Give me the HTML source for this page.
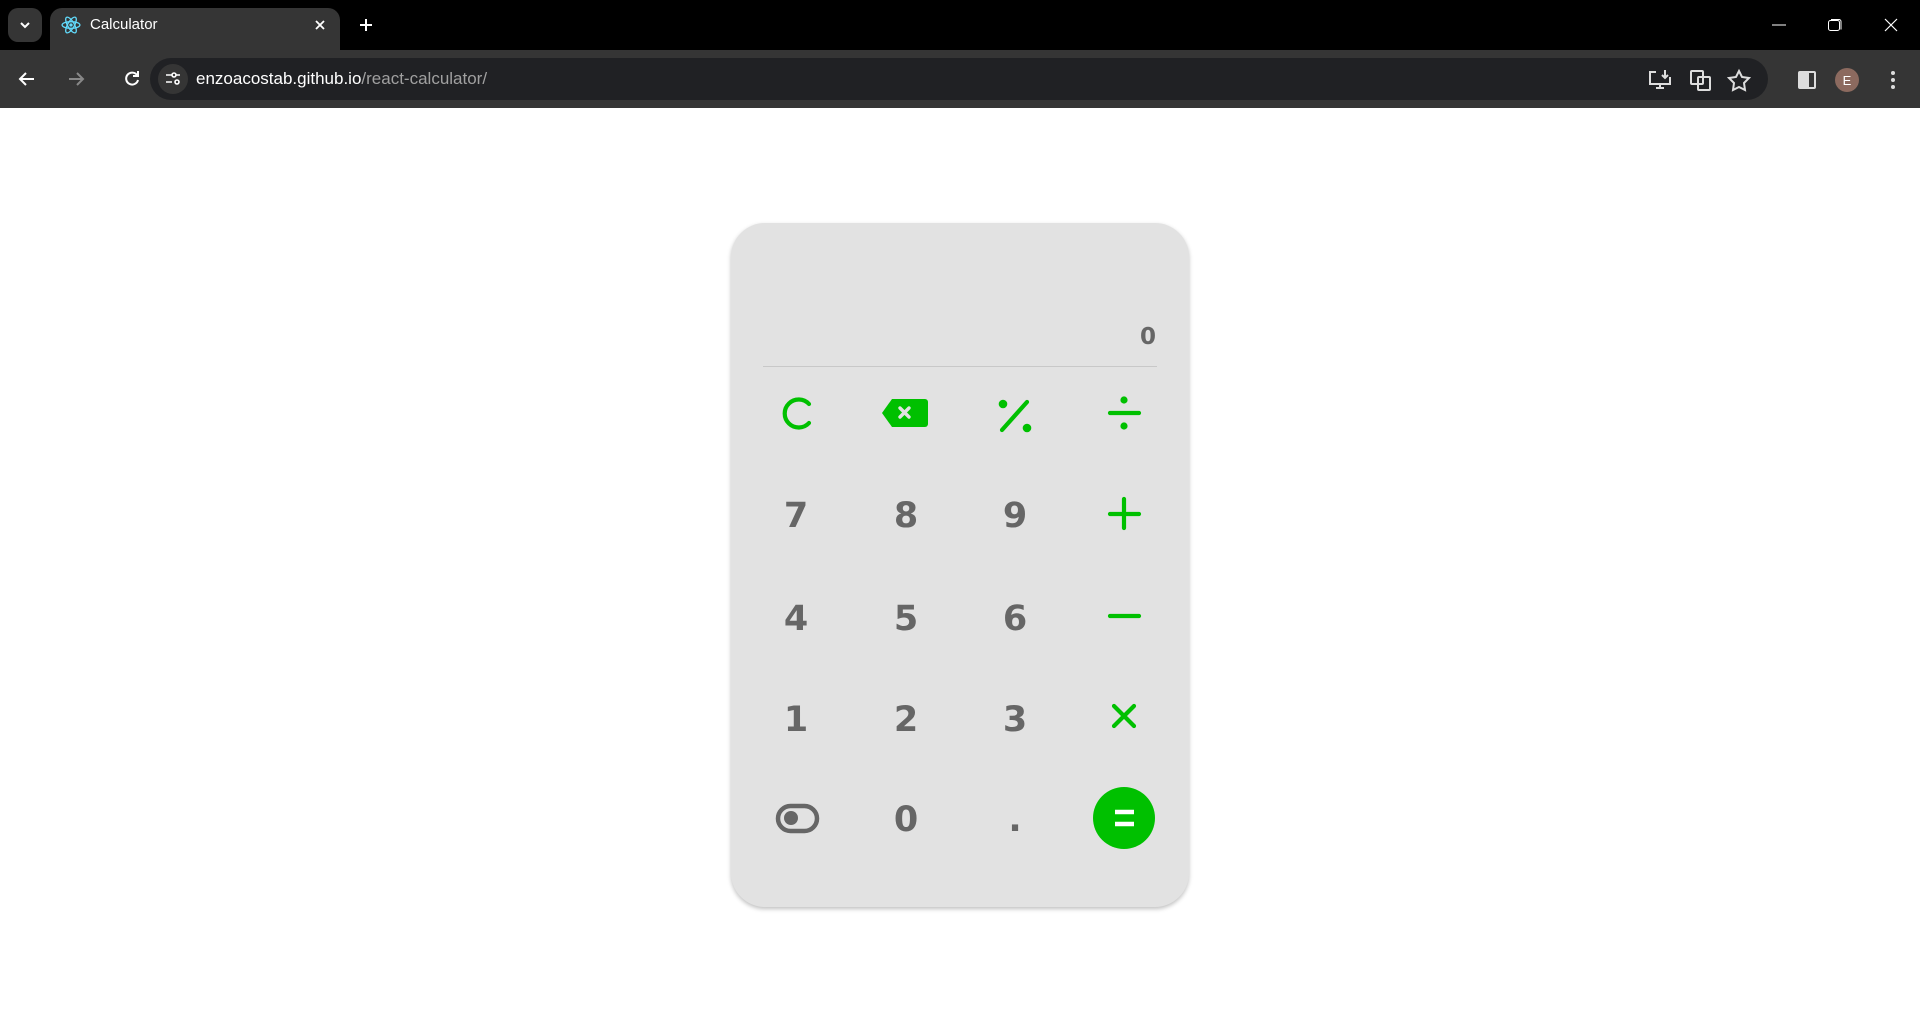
<!DOCTYPE html>
<html><head><meta charset="utf-8"><style>
*{margin:0;padding:0;box-sizing:border-box}
body{width:1920px;height:1020px;background:#fff;position:relative;overflow:hidden;font-family:"Liberation Sans",sans-serif}
.abs{position:absolute}
#tabbar{left:0;top:0;width:1920px;height:50px;background:#000}
#toolbar{left:0;top:50px;width:1920px;height:58px;background:#353535}
#calc{left:731px;top:223px;width:458px;height:684px;background:#e2e2e2;border-radius:34px;box-shadow:0 2px 4px rgba(0,0,0,.25)}
.k{position:absolute;width:90px;height:80px;margin-left:-45px;margin-top:-40px;display:flex;align-items:center;justify-content:center;font-family:"DejaVu Sans","Liberation Sans",sans-serif;font-weight:bold;font-size:35px;color:#666}
</style></head><body>
<div id="tabbar" class="abs"></div>
<div class="abs" style="left:8px;top:8px;width:34px;height:34px;background:#353535;border-radius:10px"></div>
<svg class="abs" style="left:18px;top:18px" width="14" height="14"><path d="M3 5l4 4 4-4" stroke="#fff" stroke-width="2" fill="none"/></svg>
<div class="abs" style="left:50px;top:8px;width:290px;height:46px;background:#353535;border-radius:12px 12px 0 0"></div>
<svg class="abs" style="left:61px;top:15px" width="20" height="20" viewBox="0 0 18 18"><g fill="none" stroke="#61dafb" stroke-width="1.2"><ellipse cx="9" cy="9" rx="8" ry="3"/><ellipse cx="9" cy="9" rx="8" ry="3" transform="rotate(60 9 9)"/><ellipse cx="9" cy="9" rx="8" ry="3" transform="rotate(120 9 9)"/></g><circle cx="9" cy="9" r="1.5" fill="#61dafb"/></svg>
<div class="abs" style="left:90px;top:16px;color:#fff;font-size:15px">Calculator</div>
<svg class="abs" style="left:314px;top:19px" width="12" height="12"><path d="M2 2l8 8M10 2l-8 8" stroke="#fff" stroke-width="1.8"/></svg>
<svg class="abs" style="left:359px;top:18px" width="14" height="14"><path d="M7 1v12M1 7h12" stroke="#fff" stroke-width="2"/></svg>
<svg class="abs" style="left:1770px;top:18px" width="140" height="14"><path d="M2 7h14" stroke="#fff" stroke-width="1"/><rect x="58.5" y="2.5" width="11" height="10" rx="2" fill="none" stroke="#fff"/><path d="M61 1.5h8a2 2 0 0 1 2 2v8" fill="none" stroke="#fff"/><path d="M115 1l12 12M127 1l-12 12" stroke="#fff" stroke-width="1.2"/></svg>
<div id="toolbar" class="abs"></div>
<svg class="abs" style="left:17px;top:70px" width="130" height="18"><g fill="none" stroke-width="2"><path d="M17 9H3M9 3L3 9l6 6" stroke="#fff"/><path d="M52 9h14M60 3l6 6-6 6" stroke="#888"/><path d="M120 5a6 6 0 1 0 1 5M121 1v5h-5" stroke="#fff"/></g></svg>
<div class="abs" style="left:150px;top:58px;width:1618px;height:42px;background:#202124;border-radius:21px"></div>
<div class="abs" style="left:158px;top:64px;width:30px;height:30px;background:#353535;border-radius:15px"></div>
<svg class="abs" style="left:165px;top:71px" width="16" height="16"><g stroke="#fff" stroke-width="1.6" fill="none"><path d="M1 4h6M1 11h6M11 4h4"/><circle cx="9" cy="4" r="2"/><circle cx="12" cy="11" r="2"/></g></svg>
<div class="abs" style="left:196px;top:69px;font-size:17px;color:#fff;white-space:nowrap">enzoacostab.github.io<span style="color:#a0a0a0">/react-calculator/</span></div>
<svg class="abs" style="left:1648px;top:68px" width="260" height="24"><g fill="none" stroke="#ddd" stroke-width="2"><path d="M8 4H2v12h20V9M8 20h8M12 16v4M17 2v8M14 7l3 3 3-3"/><rect x="43" y="3" width="12" height="13" rx="1"/><rect x="50" y="9" width="12" height="13" rx="1"/><path d="M91 3l3 6 7 1-5 5 1 7-6-3-6 3 1-7-5-5 7-1z"/><rect x="151" y="4" width="16" height="16" rx="1"/></g><rect x="151" y="4" width="10" height="16" fill="#ddd"/><circle cx="199" cy="12" r="12" fill="#8c6a5f"/><text x="199" y="17" text-anchor="middle" fill="#fff" font-size="13" font-family="Liberation Sans">E</text><g fill="#ddd"><circle cx="245" cy="5" r="2"/><circle cx="245" cy="12" r="2"/><circle cx="245" cy="19" r="2"/></g></svg>

<div id="calc" class="abs"></div>
<div class="abs" style="left:1080px;top:324px;width:76px;text-align:right;font-family:'DejaVu Sans',sans-serif;font-weight:bold;font-size:23px;color:#666">0</div>
<div class="abs" style="left:763px;top:366px;width:394px;height:1px;background:#c8c8c8"></div>

<svg class="abs" style="left:731px;top:223px" width="458" height="684">
<g transform="translate(-731,-223)" fill="none" stroke="#00c000" stroke-linecap="round">
<path d="M809 404a14 14 0 1 0 0 19" stroke-width="4.2"/>
<path d="M892 399h33a3 3 0 0 1 3 3v22a3 3 0 0 1-3 3h-33l-10-14z" fill="#00c000" stroke="none"/>
<path d="M900 408l9 9M909 408l-9 9" stroke="#e2e2e2" stroke-width="3.4"/>
<path d="M1027 402l-25 28" stroke-width="4.2"/>
<circle cx="1003" cy="404" r="4.3" fill="#00c000" stroke="none"/><circle cx="1027" cy="428" r="4.3" fill="#00c000" stroke="none"/>
<path d="M1110 413h29" stroke-width="4.2"/>
<circle cx="1124" cy="400" r="3.6" fill="#00c000" stroke="none"/><circle cx="1124" cy="426" r="3.6" fill="#00c000" stroke="none"/>
<path d="M1110 514h29M1124 499v29" stroke-width="4.2"/>
<path d="M1110 616h29" stroke-width="4.2"/>
<path d="M1114 706l20 20M1134 706l-20 20" stroke-width="4.2"/>
</g>
<g transform="translate(-731,-223)">
<rect x="778" y="806" width="39" height="25" rx="12.5" fill="none" stroke="#666" stroke-width="4.5"/>
<circle cx="791" cy="818" r="7" fill="#666"/>
<circle cx="1124" cy="818" r="31" fill="#00c000"/>
<path d="M1115 812h19M1115 824h19" stroke="#fff" stroke-width="4.5"/>
</g></svg>

<div class="k" style="left:796px;top:516px">7</div>
<div class="k" style="left:906px;top:516px">8</div>
<div class="k" style="left:1015px;top:516px">9</div>
<div class="k" style="left:796px;top:619px">4</div>
<div class="k" style="left:906px;top:619px">5</div>
<div class="k" style="left:1015px;top:619px">6</div>
<div class="k" style="left:796px;top:720px">1</div>
<div class="k" style="left:906px;top:720px">2</div>
<div class="k" style="left:1015px;top:720px">3</div>
<div class="k" style="left:906px;top:820px">0</div>
<div class="k" style="left:1015px;top:820px">.</div>
</body></html>
